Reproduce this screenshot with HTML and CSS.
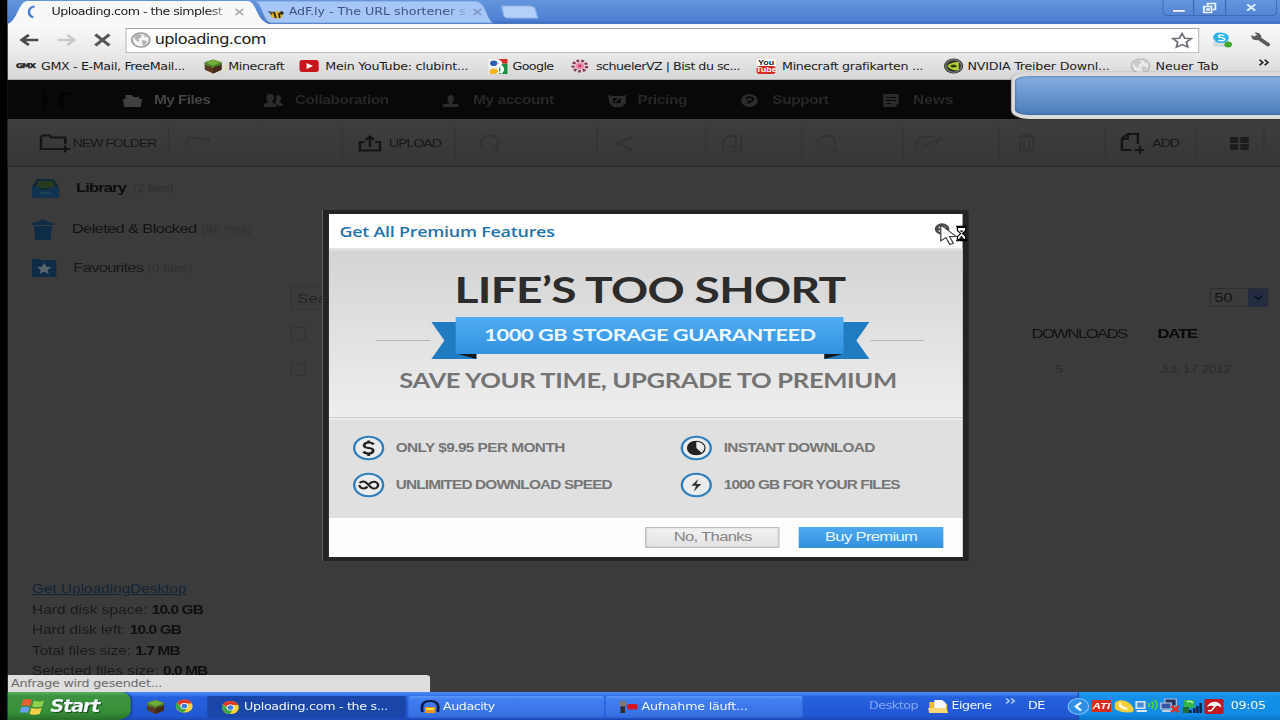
FILE: index.html
```html
<!DOCTYPE html>
<html lang="de">
<head>
<meta charset="utf-8">
<title>Uploading.com - the simplest</title>
<link rel="stylesheet" href="styles.css">
</head>
<body>
<svg class="defs" width="0" height="0">
  <symbol id="grass" viewBox="0 0 16 16"><path d="M1 4 8 1l7 3v8l-7 4-7-4z" fill="#5b3a22"/><path d="M8 8l7-3v7l-7 4z" fill="#43291a"/><path d="M1 4 8 1l7 3-7 4z" fill="#6fae3c"/><path d="M1 4l7 4 7-4v2l-3 2-2 0-2 2-3-2-2 0-2-2z" fill="#4f8a2b"/></symbol>
  <symbol id="globe" viewBox="0 0 16 16"><circle cx="8" cy="8" r="7" fill="#f4f4f4" stroke="#999" stroke-width="1.4"/><path d="M3 4l3-2 3 1-1 3-2 1 1 2-1 1-3-3zM9 8l4 1-1 3-2 2-1-3zM10 2l3 3-2 0z" fill="#b5b5b5"/></symbol>
  <symbol id="chrome" viewBox="0 0 16 16"><circle cx="8" cy="8" r="7.5" fill="#ffd23c"/><path d="M1.5 4.2A7.5 7.5 0 0 1 14.8 5H8a3 3 0 0 0-3 3z" fill="#e0392b"/><path d="M1.5 4.2A7.5 7.5 0 0 0 7.5 15.5L10.5 10A3 3 0 0 1 5.3 9.5z" fill="#3aa648"/><circle cx="8" cy="8" r="3.5" fill="#fff"/><circle cx="8" cy="8" r="2.6" fill="#3e7be0"/></symbol>
</svg>
<div class="screen">
  <header class="browser">
    <div class="tabstrip">
      <div class="tab active">
        <svg class="shape" viewBox="0 0 200 24" preserveAspectRatio="none"><path d="M0 24C8 20 8 2 15 1H184C191 2 190 20 200 24z" fill="#f8f8f9"/></svg>
        <svg class="spin" width="12" height="14" viewBox="0 0 12 14"><path d="M8 1.500C3 2 2 10 7 12.500" fill="none" stroke="#4d82cf" stroke-width="2"/></svg>
        <span class="tab-title t1">Uploading.com - the simplest</span>
        <svg class="x" width="8" height="8" viewBox="0 0 8 8"><path d="M1 1l6 6M7 1l-6 6" stroke="#aaa" stroke-width="1.500"/></svg>
      </div>
      <div class="tab idle">
        <svg class="shape" viewBox="0 0 200 24" preserveAspectRatio="none"><path d="M0 1H183C191 2 192 20 197 23H13C6 20 7 5 0 1z" fill="#a5c6f6" stroke="#6f97d8" stroke-width=".8"/></svg>
        <svg class="bee" width="13" height="12" viewBox="0 0 13 12"><ellipse cx="7" cy="7" rx="5" ry="3.500" fill="#d9b12b" transform="rotate(15 7 7)"/><path d="M5 4l1.500 6M9 5l.5 5" stroke="#222" stroke-width="1.300"/><circle cx="11" cy="5" r="1.700" fill="#332b12"/><path d="M0 3l5 1-2 3z" fill="#555"/></svg>
        <span class="tab-title t2">AdF.ly - The URL shortener s</span>
        <svg class="x" width="8" height="8" viewBox="0 0 8 8"><path d="M1 1l6 6M7 1l-6 6" stroke="#7f98c4" stroke-width="1.500"/></svg>
      </div>
      <svg class="newtab" width="30" height="14" viewBox="0 0 30 14"><path d="M1 1H23Q26 1 27 4L29 13H6Q3 13 2.500 10z" fill="#b3d0f8" stroke="#8fb2ea"/></svg>
      <div class="winbtns">
        <span><svg width="12" height="12" viewBox="0 0 12 12"><path d="M1 7.500h10v2.800H1z" fill="#eaf2ff" stroke="#35599d" stroke-width=".5"/></svg></span>
        <span><svg width="12" height="12" viewBox="0 0 12 12"><path d="M4.500 3.500V1.500h6v6h-2M1.500 4.500h6v6h-6zM4 7h1.500v1H4z" fill="none" stroke="#eaf2ff" stroke-width="1.500"/></svg></span>
        <span class="close"><svg width="9" height="9" viewBox="0 0 10 10"><path d="M1.500 1.500l7 7M8.500 1.500l-7 7" stroke="#dcebff" stroke-width="2"/></svg></span>
      </div>
    </div>
    <div class="navrow">
      <svg class="back" width="16" height="14" viewBox="0 0 16 14"><path d="M15 7H2.500M7.500 1.800 2 7l5.500 5.200" fill="none" stroke="#4b4b4b" stroke-width="2.500"/></svg>
      <svg class="fwd" width="16" height="14" viewBox="0 0 16 14"><path d="M1 7h12.500M8.500 1.800 14 7l-5.500 5.200" fill="none" stroke="#c9c9c9" stroke-width="2.300"/></svg>
      <svg class="stop" width="14" height="14" viewBox="0 0 14 14"><path d="M1.500 1.500l11 11M12.500 1.500l-11 11" stroke="#555" stroke-width="2.600"/></svg>
      <div class="omnibox">
        <svg width="16" height="16"><use href="#globe"/></svg>
        <span>uploading.com</span>
        <svg class="star" width="17" height="17" viewBox="0 0 17 17"><path d="M8.500 1.500l2.100 4.700 5 .5-3.700 3.400 1 5-4.400-2.600-4.400 2.600 1-5L1.400 6.700l5-.5z" fill="#fff" stroke="#6f7179" stroke-width="1.500"/></svg>
      </div>
      <svg class="skype" width="17" height="16" viewBox="0 0 17 16"><rect x="2" y="5" width="12" height="10" rx="1" fill="#d2dade"/><path d="M4 1q3-1 6 0 4 1 4 5-1 5-6 5-4 0-5-3-3-3 1-7z" fill="#2cb1ea"/><path d="M10.500 3.600Q6 2 6 4.400C6 6 11 5.500 10.800 7.500 10.500 9.300 7 9 6 8" fill="none" stroke="#fff" stroke-width="1.300"/><circle cx="13.500" cy="12.500" r="3" fill="#43a82e"/></svg>
      <svg class="wrench" width="16" height="15" viewBox="0 0 16 15"><path d="M5 5l8.500 7.500" stroke="#5c5c5c" stroke-width="3.600" stroke-linecap="round"/><path d="M3 .8 5.800 3.500 4.200 5.300.8 3Q0 8 4.500 8.200 9 7.500 8.300 3.500 6.500-.5 3 .8z" fill="#5c5c5c"/></svg>
    </div>
    <div class="bookmarks">
      <div class="bm"><b class="gmx">GMX</b><span class="k1">GMX - E-Mail, FreeMail...</span></div>
      <div class="bm"><svg width="15" height="16"><use href="#grass"/></svg><span class="k2">Minecraft</span></div>
      <div class="bm"><svg width="15" height="12" viewBox="0 0 15 12"><rect width="15" height="12" rx="2" fill="#c8161d"/><path d="M5.500 3l5 3-5 3z" fill="#fff"/></svg><span class="k3">Mein YouTube: clubint...</span></div>
      <div class="bm"><svg width="16" height="15" viewBox="0 0 16 16"><rect width="16" height="16" fill="#f4f4f4"/><path d="M8 0h8v5H8z" fill="#dd2c25"/><path d="M9 5h7v11H9z" fill="#188f42"/><path d="M7 1q5 3 2 6 5 3 1 8" stroke="#fff" stroke-width="3" fill="none"/><circle cx="4.500" cy="4.500" r="3" fill="#2b5fb3"/><path d="M1 15q-1-4 3-5 4 0 4 3 0 2-2 3H2z" fill="#f2b41d"/></svg><span class="k4">Google</span></div>
      <div class="bm"><svg width="14" height="14" viewBox="0 0 14 14"><circle cx="7" cy="7" r="5.300" fill="none" stroke="#8b3a52" stroke-width="2.500" stroke-dasharray="2.200 1.500"/><circle cx="7" cy="7" r="3.400" fill="#ee8fae"/><circle cx="7" cy="7" r="1.400" fill="#c33b63"/></svg><span class="k5">schuelerVZ | Bist du sc...</span></div>
      <div class="bm"><span class="yt"><b>You</b><i>Tube</i></span><span class="k6">Minecraft grafikarten ...</span></div>
      <div class="bm"><svg width="16" height="16" viewBox="0 0 16 16"><circle cx="8" cy="8" r="7.500" fill="#30332c"/><circle cx="8" cy="8" r="6.200" fill="none" stroke="#80847a"/><path d="M3 8q3-4 9-4v8q-6 1-9-4z" fill="#b4d433"/><path d="M5 8q3-3 6 0-3 3-6 0z" fill="#2e3a14"/></svg><span class="k7">NVIDIA Treiber Downl...</span></div>
      <div class="bm"><svg class="pale" width="16" height="16"><use href="#globe"/></svg><span class="k8">Neuer Tab</span></div>
      <svg class="more" width="9" height="7" viewBox="0 0 9 7"><path d="M1 .8 3.600 3.500 1 6.200M5 .8l2.600 2.700L5 6.200" fill="none" stroke="#222" stroke-width="1.400"/></svg>
    </div>
  </header>

  <main class="site">
    <nav class="topnav">
      <svg class="logo" width="38" height="26" viewBox="0 0 38 26"><path d="M6 3v20M19 8q3-4 7 0M19 22V8" stroke="#030303" stroke-width="3" fill="none"/></svg>
      <a class="on"><svg width="15" height="13" viewBox="0 0 15 13"><path d="M2 1h5l1 2h5v2H2zM0 5h15l-1 8H1z" fill="#404040"/></svg>My Files</a>
      <a><svg width="15" height="13" viewBox="0 0 15 13"><path d="M5 0q3 0 3 3.500T6.500 8L10 10.500V13H0v-2.500L3.500 8Q2 7 2 3.500T5 0zM11 1q3 0 2.500 4T12 8l3 2v2h-4L9 8q1-2 1-6z" fill="#2b2b2b"/></svg>Collaboration</a>
      <a><svg width="12" height="13" viewBox="0 0 12 13"><path d="M6 1q2.500 0 2.500 3.500T7.500 8v2H12v3H0v-3h4.500V8Q3.500 7 3.500 4.500T6 1z" fill="#2b2b2b"/></svg>My account</a>
      <a><svg width="14" height="13" viewBox="0 0 14 13"><path d="M0 1l3 1h8l3-1v8l-3 4H4L1 9zM4 4v5h6V4z" fill="#2b2b2b" fill-rule="evenodd"/><path d="M5 8l5-5" stroke="#2b2b2b" stroke-width="1.500"/></svg>Pricing</a>
      <a><svg width="13" height="13" viewBox="0 0 13 13"><circle cx="6.500" cy="6.500" r="6.500" fill="#2b2b2b"/><path d="M4 5q1-2.500 4-1.500t0 4H6v2" stroke="#080808" stroke-width="1.700" fill="none"/></svg>Support</a>
      <a><svg width="12" height="13" viewBox="0 0 12 13"><path d="M0 0h12v9l-3 4H0zM2 3v1h8V3zM2 6v1h8V6zM2 9v1h4V9z" fill="#2b2b2b" fill-rule="evenodd"/></svg>News</a>
    </nav>
    <div class="toolbar">
      <div class="cell c1"><svg width="24" height="19" viewBox="0 0 24 19"><path d="M20 10V3.500H9L8 1.500H2L1 3.500v11.500h16M20 11.500v7M16.500 15H24" fill="none" stroke="#151515" stroke-width="1.900"/></svg><span>NEW FOLDER</span></div>
      <div class="cell c2"><svg width="20" height="14" viewBox="0 0 20 14"><path d="M1 10V4Q3 1 8 2l10 1v3" fill="none" stroke="#333" stroke-width="1.600"/></svg></div>
      <div class="cell c3"><svg width="18" height="17" viewBox="0 0 18 17"><path d="M5 7H1.200v8.500h15.600V7H13M9 12V2M5.800 5 9 1.500 12.200 5" fill="none" stroke="#151515" stroke-width="2"/></svg><span>UPLOAD</span></div>
      <div class="cell c4"><svg width="17" height="19" viewBox="0 0 17 19"><path d="M4 14Q-1 9 3 4q5-5 10-1 4 4 1 8M11 14h6M14 11v7" fill="none" stroke="#323232" stroke-width="1.500"/></svg></div>
      <div class="cell c5"><svg width="15" height="17" viewBox="0 0 15 17"><path d="M12 3 3 8.500l9 5.500" fill="none" stroke="#323232" stroke-width="1.500"/><circle cx="12" cy="3" r="2" fill="#323232"/><circle cx="3" cy="8.500" r="2" fill="#323232"/><circle cx="12" cy="14" r="2" fill="#323232"/></svg></div>
      <div class="cell c6"><svg width="16" height="19" viewBox="0 0 16 19"><path d="M1 14V6l4-4h6v11H4M15 1v16H8" fill="none" stroke="#323232" stroke-width="1.500"/></svg></div>
      <div class="cell c7"><svg width="18" height="19" viewBox="0 0 18 19"><path d="M2 12V6l4-4h6l3 3v8M11 14l4 3 3-3" fill="none" stroke="#323232" stroke-width="1.500"/></svg></div>
      <div class="cell c8"><svg width="22" height="16" viewBox="0 0 22 16"><path d="M1 13V6l4-4h10M6 12l14-9-5 8" fill="none" stroke="#333" stroke-width="1.500"/></svg></div>
      <div class="cell c9"><svg width="16" height="18" viewBox="0 0 16 18"><path d="M1 3h14M5 3V1h6v2M3 5v12h10V5M6 7v8M10 7v8" fill="none" stroke="#323232" stroke-width="1.500"/></svg></div>
      <div class="cell c10"><svg width="19" height="22" viewBox="0 0 19 22"><path d="M14 12V2H6L1.500 6.500V18H9M6 2v5H2M15.500 14v8M11.500 18H19" fill="none" stroke="#151515" stroke-width="1.900"/></svg><span>ADD</span></div>
      <div class="cell c11"><svg width="15" height="13" viewBox="0 0 15 13"><path d="M0 0h6.500v6H0zM8 0h6.500v6H8zM0 7h6.500v6H0zM8 7h6.500v6H8z" fill="#1d1d1d"/></svg></div>
    </div>
    <div class="content">
      <aside class="side">
        <ul class="folders">
          <li><svg width="21" height="20" viewBox="0 0 21 20"><path d="M4 0h13l4 8v11H0V8z" fill="#102735"/><path d="M5 2h11l2 5-3 2H6L3 7z" fill="#263a20"/><path d="M0 8h6q1 3 4.500 3T15 8h6v11H0z" fill="#113350"/><path d="M6 13h9v2H6z" fill="#1b4258"/></svg><b class="lib">Library</b><small>(2 files)</small></li>
          <li><svg width="17" height="20" viewBox="0 0 17 20"><path d="M0 3l5-1 1-2h5l1 2 5 1v2H0zM1.500 6h14l-1 14h-12z" fill="#0e2c48"/></svg><span class="del">Deleted &amp; Blocked</span><small>(96 files)</small></li>
          <li><svg width="19" height="18" viewBox="0 0 19 18"><path d="M0 0h5l2 1h12v17H0z" fill="#0e2c48"/><path d="M9.500 4l1.700 3.700 4 .4-3 2.800.9 4-3.600-2.100-3.600 2.100.9-4-3-2.800 4-.4z" fill="#59666e"/></svg><span class="fav">Favourites</span><small>(0 files)</small></li>
        </ul>
        <div class="stats">
          <p><a>Get UploadingDesktop</a></p>
          <p><span class="s2">Hard disk space:</span> <b>10.0 GB</b></p>
          <p><span class="s3">Hard disk left:</span> <b>10.0 GB</b></p>
          <p><span class="s4">Total files size:</span> <b>1.7 MB</b></p>
          <p><span class="s5">Selected files size:</span> <b>0.0 MB</b></p>
        </div>
      </aside>
      <section class="list">
        <div class="filter"><span class="search">Search</span><span class="select"><em>50</em><i><svg width="8" height="5" viewBox="0 0 8 5"><path d="M.8.8 4 4 7.200.8" fill="none" stroke="#0c1426" stroke-width="1.600"/></svg></i></span></div>
        <div class="row head"><i class="box"></i><span class="dl">DOWNLOADS</span><b class="date">DATE</b></div>
        <div class="row item"><i class="box"></i><span class="dl">5</span><span class="date">Jul, 17 2012</span></div>
      </section>
    </div>
    <div class="status">Anfrage wird gesendet...</div>
  </main>

  <footer class="taskbar">
    <div class="start"><svg width="19" height="18" viewBox="0 0 19 18"><path d="M2 3q4-2 7 0l-1.500 6Q4 7.500.5 9z" fill="#ea5f33"/><path d="M10.500 3.500q4 2 8 0L17 9.500q-4 1.500-8 0z" fill="#8fd14c"/><path d="M.3 10.500q4-1.500 7 0L5.500 16q-3-1.500-6 0z" fill="#6c9ff0"/><path d="M8.500 11q4 1.500 8 0L15 17q-4 1.500-8 0z" fill="#f6cf46"/></svg><b>Start</b></div>
    <div class="quick"><svg width="15" height="15"><use href="#grass"/></svg><svg width="14" height="14"><use href="#chrome"/></svg></div>
    <div class="task current"><svg width="14" height="15" viewBox="0 0 16 16"><use href="#chrome"/></svg><span class="w1">Uploading.com - the s...</span></div>
    <div class="task"><svg width="14" height="14" viewBox="0 0 14 14"><path d="M1 12Q-1 1 7 1t6 11" fill="none" stroke="#12194b" stroke-width="2.200"/><path d="M3 7h8v6H3z" fill="#f3941d"/><path d="M4 8h6v2H4z" fill="#ffe13d"/></svg><span class="w2">Audacity</span></div>
    <div class="task"><svg width="16" height="14" viewBox="0 0 16 14"><path d="M4.500 5v8" stroke="#302b2b" stroke-width="3.500"/><circle cx="4.500" cy="3.500" r="3" fill="#777"/><rect x="8" y="4" width="8" height="5.500" rx="1.500" fill="#d5141c"/></svg><span class="w3">Aufnahme läuft...</span></div>
    <div class="deskbar"><span class="desk">Desktop</span><svg width="16" height="15" viewBox="0 0 16 15"><path d="M1 3h5l1 2h8v9H1z" fill="#e8b93a"/><path d="M5 1h6l3 3v7H5z" fill="#f7f7fb"/><path d="M0 9h14l2 5H1z" fill="#f7d774"/></svg><span class="eig">Eigene</span><svg class="chev" width="9" height="6" viewBox="0 0 9 6"><path d="M1 .5 3.500 3 1 5.500M5 .5 7.500 3 5 5.500" fill="none" stroke="#b7cdfb" stroke-width="1.200"/></svg><span class="de">DE</span></div>
    <div class="tray">
      <svg class="knob" width="17" height="17" viewBox="0 0 17 17"><circle cx="8.500" cy="8.500" r="8" fill="#2f8fe6" stroke="#7dbdf6"/><path d="M10.500 4.500l-4 4 4 4" fill="none" stroke="#fff" stroke-width="2"/></svg>
      <b class="ati">ATI</b>
      <svg width="15" height="15" viewBox="0 0 16 15"><path d="M1 4Q3 0 8 1t8 7-4 6-11-4z" fill="#f3cf3a"/><path d="M4 4q0 7 8 7l-1-3-2 0-3-3 0-2z" fill="#fff8d8"/></svg>
      <svg width="17" height="15" viewBox="0 0 17 15"><path d="M0 2h8v8H0z" fill="#cfe3f5"/><path d="M1.500 3.500h5v5h-5z" fill="#4b8fd0"/><path d="M1 12h8" stroke="#dfe9f2" stroke-width="2"/><path d="M10 4q2 2 0 4M12.500 2.500q3 3.500 0 7M15 1q4 5 0 10" fill="none" stroke="#51d23e" stroke-width="1.300"/></svg>
      <svg width="16" height="16" viewBox="0 0 16 16"><path d="M4 1h9v7H4z" fill="#23335f" stroke="#aebbd6"/><path d="M1 5h8v6H1z" fill="#3557a5" stroke="#c7cfe2"/><path d="M2 13h7" stroke="#c9cfda" stroke-width="2"/><path d="M9 8l6 6M15 8l-6 6" stroke="#e22f24" stroke-width="2.200"/></svg>
      <svg width="15" height="16" viewBox="0 0 15 16"><path d="M1 2h8v8H1z" fill="#35b34a"/><path d="M0 9h5v6H0z" fill="#206b3a"/><path d="M3 4q3-2 5 1" stroke="#b6f1b2" fill="none" stroke-width="1.500"/><path d="M6 15v-3M9 15v-5M11.500 15V8M14 15V5" stroke="#10204a" stroke-width="2"/></svg>
      <svg width="15" height="15" viewBox="0 0 16 16"><rect width="16" height="16" rx="1.500" fill="#c01721"/><path d="M2 8.500Q4 3 9 3q5 1 5 6-3-3-5-1-3-2-7 .5z" fill="#fff"/><path d="M9 7 6 12q-1.500 1.500-3 0" stroke="#fff" stroke-width="1.300" fill="none"/></svg>
      <span class="clock">09:05</span>
    </div>
  </footer>

  <div class="gadget"></div>

  <div class="modal">
    <div class="m-head"><span>Get All Premium Features</span>
      <svg class="m-close" width="14" height="13" viewBox="0 0 14 13"><circle cx="7" cy="6" r="5.700" fill="#4c4c4c"/><path d="M4.500 4l5 4.500M9.500 4l-5 4.500" stroke="#ddd" stroke-width="1.600"/></svg></div>
    <div class="hero">
      <h1>LIFE’S TOO SHORT</h1>
      <div class="ribbon-row">
        <i class="rule"></i>
        <div class="ribbon"><svg class="tails" viewBox="0 0 438 43" preserveAspectRatio="none"><path d="M0 5H45V42H0L13 23.500zM438 5H393V42H438L425 23.500z" fill="#217bc1"/><path d="M25 36.500H45V42zM413 36.500H393V42z" fill="#15191d"/></svg><span>1000 GB STORAGE GUARANTEED</span></div>
        <i class="rule"></i>
      </div>
      <h2>SAVE YOUR TIME, UPGRADE TO PREMIUM</h2>
    </div>
    <div class="features">
      <div><svg width="26" height="26" viewBox="0 0 26 26"><circle cx="13" cy="13" r="11.300"/><path d="M16.800 9.500Q16 7.500 13 7.500T9.500 10 13 13t3.500 3-3.500 2.500-4-2M13 5.500v3M13 18v3" class="ink"/></svg><span class="f1">ONLY $9.95 PER MONTH</span></div>
      <div><svg width="26" height="26" viewBox="0 0 26 26"><circle cx="13" cy="13" r="11.300"/><path d="M6 11Q7 9.500 9 9.500C12 9.500 14 16.500 17 16.500A3.300 3.300 0 0 0 17 9.800Q15 9.800 13.500 12M12 14.500Q11 16.500 9 16.500A3 3 0 0 1 6 13" class="ink thin"/></svg><span class="f2">UNLIMITED DOWNLOAD SPEED</span></div>
      <div><svg width="26" height="26" viewBox="0 0 26 26"><circle cx="13" cy="13" r="11.300"/><circle cx="13" cy="13" r="6.800" class="ink slim"/><path d="M13 6a7 7 0 1 0 4.500 12.300L13 13z" fill="#222"/></svg><span class="f3">INSTANT DOWNLOAD</span></div>
      <div><svg width="26" height="26" viewBox="0 0 26 26"><circle cx="13" cy="13" r="11.300"/><path d="M14.500 7 9 13.800h3.800L11 19.500l6-7.500h-4z" fill="#333"/></svg><span class="f4">1000 GB FOR YOUR FILES</span></div>
    </div>
    <div class="m-foot"><button class="no">No, Thanks</button><button class="buy">Buy Premium</button></div>
  </div>

  <svg class="cursor" width="22" height="24" viewBox="0 0 22 24"><path d="M1 1v16l4-3.500 3 7 2.800-1.200-3-6.800H13z" fill="#fff" stroke="#444" stroke-width="1"/><path d="M13 2.500h8.500M13 16.500h8.500" stroke="#000" stroke-width="1.600"/><path d="M14 3.500h6.500v3L18 9.500l2.500 3v3H14v-3l2.500-3L14 6.500z" fill="#fff" stroke="#000" stroke-width="1"/><path d="M15.500 6.500h3.500L17.200 8.500zM17.200 11.500l2 3.500h-4z" fill="#222"/></svg>
</div>
</body>
</html>
```
FILE: styles.css
```css
/* The desktop is 1000 units wide and stretched sideways to 1280px.
   --u is one on-screen pixel, measured in the unstretched layout. */
:root { --u: .78125px; }
* { box-sizing: border-box; }
html, body { height: 720px; overflow: hidden; background: #000; }
body { margin: 0; }
svg { display: block; flex: none; overflow: visible; }
.defs { position: absolute; }
h1, h2, p, ul { margin: 0; padding: 0; }
li { list-style: none; }

.screen {
  position: relative;
  width: 1000px; height: 720px;
  padding-left: 5.5px;
  display: flex; flex-direction: column;
  transform: scaleX(1.28); transform-origin: 0 0;
  overflow: hidden;
  font-family: "DejaVu Sans Condensed", "DejaVu Sans", sans-serif;
  font-size: 11px; color: #1c1c1c; white-space: nowrap;
}

/* browser chrome */
.browser { height: 80px; flex: none; background: linear-gradient(#fafafa 24px, #ececec 50px, #d6d6d6); border-bottom: 1px solid #b4b4b4; }
.tabstrip { height: 24px; display: flex; background: linear-gradient(#6396dc, #4c7fd3 21px, #3d6fc0 22px, #4d7ac0); }
.tab { position: relative; height: 24px; display: flex; align-items: center; }
.tab .shape { position: absolute; inset: 0; width: 100%; height: 100%; }
.tab > :not(.shape) { position: relative; }
.active { width: calc(261 * var(--u)); padding-left: calc(17 * var(--u)); z-index: 1; }
.idle { width: calc(242 * var(--u)); margin-left: calc(-13 * var(--u)); padding-left: calc(13 * var(--u)); color: #3e5480; }
.spin { margin-right: calc(12 * var(--u)); }
.tab .bee { margin: 4px calc(4 * var(--u)) 0 0; }
.tab-title { overflow: hidden; line-height: 24px; height: 24px; -webkit-mask-image: linear-gradient(90deg, #000 88%, rgba(0,0,0,.15)); mask-image: linear-gradient(90deg, #000 88%, rgba(0,0,0,.15)); }
.t1 { width: calc(178 * var(--u)); letter-spacing: -.42px; }
.t2 { width: calc(178 * var(--u)); letter-spacing: -.02px; }
.x { margin-left: calc(5 * var(--u)); }
.newtab { margin: 5px 0 0 calc(4 * var(--u)); }
.winbtns { margin-left: auto; display: flex; height: 16px; margin-right: calc(2 * var(--u)); border: 1px solid #3f69b8; border-top: 0; border-radius: 0 0 4px 4px; }
.winbtns span { width: calc(31 * var(--u)); display: flex; align-items: center; justify-content: center; border-right: 1px solid #3f69b8; }
.winbtns .close { width: calc(51 * var(--u)); border: 0; }
.navrow { height: 31px; display: flex; align-items: center; padding: 0 0 0 calc(12 * var(--u)); }
.fwd { margin-left: calc(17 * var(--u)); }
.stop { margin-left: calc(16 * var(--u)); }
.omnibox { margin-left: calc(14 * var(--u)); width: calc(1074 * var(--u)); height: 25px; margin-top: 1px; display: flex; align-items: center; background: #fff; border: 1px solid #c0bfbd; border-top-color: #a5a5a5; padding-left: calc(4 * var(--u)); font-size: 14px; letter-spacing: -.5px; }
.omnibox span { margin: -2px 0 0 calc(4 * var(--u)); }
.star { margin-left: auto; margin-right: calc(5 * var(--u)); }
.skype { margin-left: calc(12 * var(--u)); }
.wrench { margin-left: calc(18 * var(--u)); }
.bookmarks { display: flex; height: 22px; align-items: center; padding-left: calc(9 * var(--u)); }
.bm { display: flex; align-items: center; gap: calc(6 * var(--u)); flex: none; }
.bm:nth-child(1) { width: calc(188 * var(--u)); }
.bm:nth-child(2) { width: calc(96 * var(--u)); gap: calc(5 * var(--u)); }
.bm:nth-child(3) { width: calc(187 * var(--u)); }
.bm:nth-child(4) { width: calc(84 * var(--u)); gap: calc(5 * var(--u)); }
.bm:nth-child(5) { width: calc(185 * var(--u)); gap: calc(7 * var(--u)); }
.bm:nth-child(6) { width: calc(187 * var(--u)); }
.bm:nth-child(7) { width: calc(187 * var(--u)); gap: calc(4 * var(--u)); }
.bm:nth-child(8) { width: calc(128 * var(--u)); gap: calc(5 * var(--u)); }
.gmx { font: 900 6.500px "DejaVu Sans", sans-serif; letter-spacing: -.6px; width: calc(19 * var(--u)); -webkit-text-stroke: .3px; }
.k1 { letter-spacing: -.28px; } .k2 { letter-spacing: -.29px; } .k3 { letter-spacing: -.19px; } .k4 { letter-spacing: -.48px; }
.k5 { letter-spacing: -.39px; } .k6 { letter-spacing: -.26px; } .k7 { letter-spacing: -.15px; } .k8 { letter-spacing: -.05px; }
.yt { width: calc(20 * var(--u)); height: 15px; display: flex; flex-direction: column; align-items: stretch; text-align: center; font: bold 7px/7px "Liberation Sans", sans-serif; background: #fff; }
.yt i { background: #d52b23; color: #fff; border-radius: 2px; height: 8px; line-height: 8px; font-style: normal; }
.pale { opacity: .5; }
.more { margin-bottom: 8px; }

/* dimmed site */
.site { position: relative; flex: 1; min-height: 0; display: flex; flex-direction: column; background: #3b3b3b; font-family: "Liberation Sans", Arial, sans-serif; }
.topnav { height: 39px; flex: none; display: flex; align-items: center; background: #080808; color: #272727; font-size: 12px; font-weight: bold; letter-spacing: -.3px; padding: 1px 0 0 calc(30 * var(--u)); }
.logo { margin-right: calc(37 * var(--u)); }
.topnav a { display: flex; align-items: center; gap: calc(12 * var(--u)); }
.topnav .on { color: #454545; letter-spacing: -.4px; }
.topnav a:nth-of-type(1) { width: calc(141 * var(--u)); }
.topnav a:nth-of-type(2) { width: calc(179 * var(--u)); }
.topnav a:nth-of-type(3) { width: calc(165 * var(--u)); gap: calc(15 * var(--u)); }
.topnav a:nth-of-type(4) { width: calc(134 * var(--u)); }
.topnav a:nth-of-type(5) { width: calc(142 * var(--u)); gap: calc(14 * var(--u)); }
.topnav a:nth-of-type(6) { gap: calc(14 * var(--u)); letter-spacing: .1px; }
.toolbar { height: 48px; flex: none; display: flex; padding-left: calc(18 * var(--u)); background: linear-gradient(#3e3e3e, #363636); border-bottom: 1px solid #292929; font-size: 11px; letter-spacing: -.8px; color: #171717; }
.cell { height: 32px; margin-top: 8px; display: flex; align-items: center; border-right: 1px solid #343434; flex: none; }
.cell span { margin-left: calc(8 * var(--u)); padding-bottom: 1px; }
.c1 { width: calc(144 * var(--u)); padding-left: calc(14 * var(--u)); }
.c1 span { margin-left: calc(3 * var(--u)); }
.c2 { width: calc(174 * var(--u)); padding-left: calc(16 * var(--u)); }
.c3 { width: calc(112 * var(--u)); padding-left: calc(15 * var(--u)); }
.c4 { width: calc(143 * var(--u)); padding-left: calc(24 * var(--u)); }
.c5 { width: calc(108 * var(--u)); padding-left: calc(16 * var(--u)); }
.c6 { width: calc(96 * var(--u)); padding-left: calc(16 * var(--u)); }
.c7 { width: calc(101 * var(--u)); padding-left: calc(13 * var(--u)); }
.c8 { width: calc(97 * var(--u)); padding-left: calc(12 * var(--u)); }
.c9 { width: calc(106 * var(--u)); padding-left: calc(16 * var(--u)); }
.c10 { width: calc(91 * var(--u)); padding-left: calc(14 * var(--u)); }
.c11 { width: calc(67 * var(--u)); padding-left: calc(33 * var(--u)); }
.content { flex: 1; min-height: 0; display: flex; overflow: hidden; }
.side { width: calc(283 * var(--u)); flex: none; padding: 1px 0 0 calc(25 * var(--u)); }
.folders { height: 408px; font-size: 13px; }
.folders li { display: flex; align-items: center; height: 41px; }
.folders li + li + li { height: 36px; }
.folders li > svg { margin-right: calc(15 * var(--u)); }
.folders li > b, .folders li > span { margin-top: -2px; }
.folders li + li > svg { margin-right: calc(18 * var(--u)); }
.folders li + li + li > svg { margin-right: calc(17 * var(--u)); }
.folders small { font-size: 10px; color: #2f2f2f; margin-left: calc(7 * var(--u)); letter-spacing: -.15px; }
.lib { color: #0c0c0c; letter-spacing: -.7px; padding-left: calc(2 * var(--u)); }
.del { letter-spacing: -.56px; color: #131313; }
.del + small { margin-left: calc(5 * var(--u)); letter-spacing: .1px; }
.fav { letter-spacing: -.6px; color: #181818; }
.fav + small { margin-left: calc(4 * var(--u)); letter-spacing: .3px; }
.stats { font-size: 12px; line-height: 20.600px; color: #1a1a1a; margin-top: 3px; padding-right: 0; }
.stats b { letter-spacing: -.68px; color: #0f0f0f; }
.stats a { color: #122537; text-decoration: underline; }
.s2 { letter-spacing: .05px; } .s3 { letter-spacing: -.02px; } .s4 { letter-spacing: -.04px; } .s5 { letter-spacing: -.02px; }
.list { flex: 1; font-size: 13px; color: #121212; padding: 119px calc(11 * var(--u)) 0 0; }
.filter { display: flex; justify-content: space-between; height: 24px; align-items: center; }
.search { border: 1px solid #353535; width: calc(300 * var(--u)); height: 24px; padding: 4px 0 0 calc(6 * var(--u)); line-height: 15px; color: #222; }
.select { width: calc(60 * var(--u)); height: 19px; border: 1px solid #2b2f35; display: flex; justify-content: space-between; margin-top: -2px; }
.select em { font-style: normal; padding-left: calc(4 * var(--u)); line-height: 18px; }
.select i { width: calc(20 * var(--u)); background: #232c40; display: flex; align-items: center; justify-content: center; }
.row { display: flex; align-items: center; height: 36px; }
.head { margin-top: 5px; }
.box { width: 12px; height: 13px; border: 1px solid #343434; }
.dl { margin-left: calc(726 * var(--u)); width: calc(126 * var(--u)); letter-spacing: -1.200px; }
.head .date { letter-spacing: -.9px; color: #080808; }
.item { font-size: 11px; color: #2b2b2b; }
.item .dl { padding-left: calc(24 * var(--u)); }
.item .date { letter-spacing: -.35px; padding-left: calc(2 * var(--u)); }
.status { position: absolute; left: 0; bottom: 0; width: calc(423 * var(--u)); height: 17px; background: #dedede; border-radius: 0 3px 0 0; padding-left: calc(4 * var(--u)); font: 11px/17px "DejaVu Sans Condensed", sans-serif; letter-spacing: -.16px; color: #6a6a6a; }

/* taskbar */
.taskbar { height: 28px; flex: none; display: flex; align-items: stretch; color: #f2f6ff; background: linear-gradient(#4a8cf0, #3a78ea 3px, #2560dd 5px, #2257d3 24px, #1b48b4); }
.taskbar span { padding-bottom: 1px; }
.start { width: calc(123 * var(--u)); display: flex; align-items: center; padding-left: calc(13 * var(--u)); background: linear-gradient(#5fae5f, #3d9440 4px, #379038 20px, #286f2a); border-radius: 0 8px 10px 0; box-shadow: 1px 0 2px #123a86; }
.start b { margin-left: calc(6 * var(--u)); font: italic bold 17px/22px "DejaVu Sans Condensed", sans-serif; letter-spacing: -1.100px; text-shadow: 1px 1px 1px #1c4d1c; padding-bottom: 1px; }
.quick { width: calc(77 * var(--u)); display: flex; align-items: center; gap: calc(10 * var(--u)); padding-left: calc(16 * var(--u)); }
.task { width: calc(196 * var(--u)); margin: 4px calc(2 * var(--u)) 2px 0; display: flex; align-items: center; padding-left: calc(13 * var(--u)); gap: calc(4 * var(--u)); background: linear-gradient(#5a95f8, #3f7df0 4px, #3973e6 18px, #2f66d8); border-radius: 2px; }
.task:nth-child(5) { padding-left: calc(11 * var(--u)); }
.current { width: calc(199 * var(--u)); padding-left: calc(14 * var(--u)); gap: calc(5 * var(--u)); background: #1a46aa; }
.w1 { letter-spacing: -.23px; } .w2 { letter-spacing: -.34px; } .w3 { letter-spacing: -.17px; }
.deskbar { margin-left: auto; display: flex; align-items: center; width: calc(209 * var(--u)); }
.desk { color: #84a9f3; letter-spacing: -.36px; width: calc(59 * var(--u)); }
.eig { letter-spacing: -.42px; margin-left: calc(3 * var(--u)); width: calc(53 * var(--u)); }
.chev { margin-bottom: 11px; }
.de { letter-spacing: -.4px; margin-left: calc(12 * var(--u)); }
.tray { width: calc(202 * var(--u)); display: flex; align-items: center; background: linear-gradient(#2c9bf2, #1590ea 4px, #118ce6 22px, #0b74c8); border-left: 1px solid #1a4fae; gap: calc(2.400 * var(--u)); }
.knob { margin-left: calc(-12 * var(--u)); }
.ati { width: calc(20 * var(--u)); flex: none; height: 12px; background: #df2a20; color: #fff; font: italic bold 9px/12px "Liberation Sans", sans-serif; text-align: center; }
.clock { letter-spacing: -.23px; margin-left: calc(5 * var(--u)); }

/* blue sidebar gadget that hangs over the browser */
.gadget { position: absolute; left: calc(1011 * var(--u)); top: 72px; width: 260px; height: 47px; border: 4px solid #dadada; border-left-width: 3.500px; border-radius: 14px / 9px; background: linear-gradient(#86aee0, #6795cd 50%, #4b7bb9); box-shadow: inset 0 0 2px #26497c, 0 1px 2px #333; }

/* premium dialog */
.modal { position: absolute; left: calc(322 * var(--u)); top: 210px; width: calc(647 * var(--u)); height: 351px; border: 4px solid #242424; border-left-width: 5px; border-right-width: 5px; display: flex; flex-direction: column; background: #fff; }
.m-head { height: 35px; flex: none; display: flex; align-items: center; justify-content: space-between; padding: 0 calc(12 * var(--u)) 0 calc(11 * var(--u)); color: #1f74ad; font: 600 14px "Open Sans", sans-serif; letter-spacing: -.2px; border-bottom: 1px solid #e6e6e6; }
.m-close { margin-top: -3px; }
.hero { height: 169px; flex: none; background: linear-gradient(#d4d4d4, #e0e0e0 45%, #efeeee); border-bottom: 1px solid #cecece; border-top: 2px solid #dfdfdf; text-align: center; padding: 17px 0 0 calc(9 * var(--u)); }
h1 { font: 700 36px/42px Lato, sans-serif; color: #2c2c2c; letter-spacing: -.53px; }
.ribbon-row { display: flex; align-items: center; justify-content: center; margin-top: 7px; }
.rule { width: calc(54 * var(--u)); height: 1px; background: #b5b5b5; margin-top: 3px; }
.ribbon { position: relative; width: calc(438 * var(--u)); height: 43px; margin: 0 calc(1 * var(--u)); display: flex; justify-content: center; align-items: flex-start; }
.tails { position: absolute; inset: 0; width: 100%; height: 43px; }
.ribbon span { position: relative; width: calc(388 * var(--u)); height: 36.500px; background: linear-gradient(#50adf3, #3291e0); color: #eef8ff; font: 700 17px/36px Lato, sans-serif; letter-spacing: -.34px; }
h2 { font: 700 20px/28px Lato, sans-serif; letter-spacing: -.28px; color: #747474; margin-top: 6px; padding-right: calc(4 * var(--u)); }
.features { height: 100px; flex: none; border-top: 2px solid #e9e9e9; background: #e0e0e0; display: grid; grid-template-columns: calc(328 * var(--u)) 1fr; grid-template-rows: 37.500px 37.500px; grid-auto-flow: column; padding: 9px 0 0 calc(23 * var(--u)); font: bold 12px "Liberation Sans", Arial, sans-serif; color: #757575; }
.features div { display: flex; align-items: center; gap: calc(11 * var(--u)); }
.features circle { fill: #ececec; stroke: #2d80bd; stroke-width: 1.900; }
.features .ink { fill: none; stroke: #222; stroke-width: 2.200; }
.features .thin { stroke-width: 1.900; }
.features .slim { stroke-width: 1; }
.f1 { letter-spacing: -.43px; } .f2 { letter-spacing: -.66px; } .f3 { letter-spacing: -.53px; } .f4 { letter-spacing: -.65px; }
.m-foot { flex: 1; display: flex; align-items: center; justify-content: flex-end; gap: calc(19 * var(--u)); padding: 0 calc(19 * var(--u)) 1px 0; background: #fdfdfd; }
button { border: 0; padding: 0 0 1px; height: 21px; font: 13px "Liberation Sans", Arial, sans-serif; letter-spacing: -.54px; }
.no { width: calc(134 * var(--u)); background: linear-gradient(#f3f3f3, #e2e2e2); border: 1px solid #bdbdbd; box-shadow: inset 0 0 2px #ccc; color: #858585; }
.buy { width: calc(145 * var(--u)); background: linear-gradient(#4ea9ef, #3390df); color: #e9f5ff; }
.cursor { position: absolute; left: calc(940 * var(--u)); top: 224px; }
```
